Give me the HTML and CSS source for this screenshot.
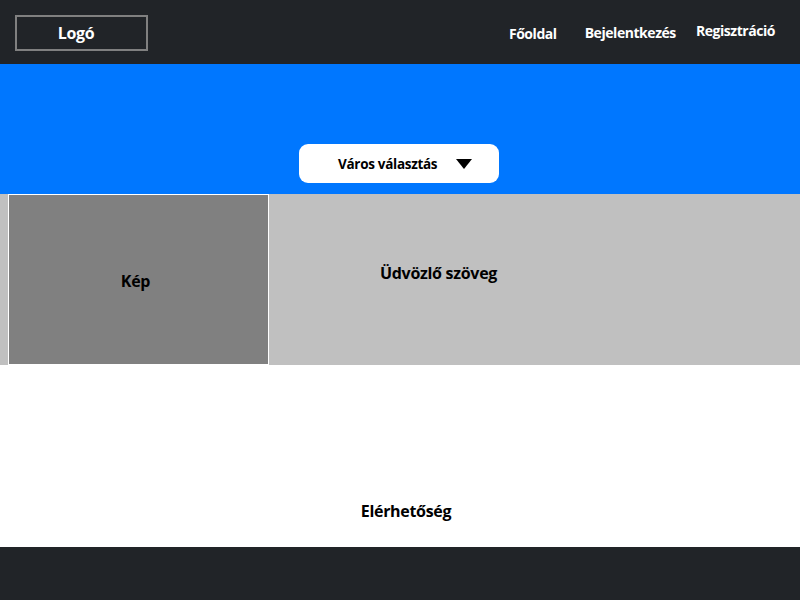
FILE: index.html
```html
<!DOCTYPE html>
<html lang="hu">
<head>
<meta charset="utf-8">
<title>Város</title>
<link rel="stylesheet" href="styles.css">
</head>
<body>
<header class="topbar">
  <div class="logo">Logó</div>
  <nav class="nav">
    <a class="nav-link nav-home" href="#">Főoldal</a>
    <a class="nav-link nav-login" href="#">Bejelentkezés</a>
    <a class="nav-link nav-reg" href="#">Regisztráció</a>
  </nav>
</header>
<section class="hero">
  <div class="city-select">
    <span class="city-label">Város választás</span>
    <svg class="caret" width="16" height="10" viewBox="0 0 16 10"><polygon points="0,0 16,0 8,10" fill="#000"/></svg>
  </div>
</section>
<section class="intro">
  <div class="picture">Kép</div>
  <div class="welcome">Üdvözlő szöveg</div>
</section>
<section class="contact">
  <div class="contact-title">Elérhetőség</div>
</section>
<footer class="footer"></footer>
</body>
</html>
```
FILE: styles.css
```css
* { box-sizing: border-box; }
html, body { margin: 0; padding: 0; }
body {
  font-family: "Open Sans", "Liberation Sans", sans-serif;
  font-weight: 700;
  color: #000;
  width: 800px;
  height: 600px;
  overflow: hidden;
}
.topbar {
  height: 64px;
  background: #212428;
  display: flex;
  align-items: flex-start;
  justify-content: space-between;
  padding: 15px 25px 0 15px;
}
.logo {
  width: 133px;
  height: 36px;
  border: 2px solid #808080;
  color: #fff;
  font-size: 16px;
  display: flex;
  align-items: center;
  justify-content: center;
  padding-right: 11px;
  letter-spacing: -0.3px;
}
.nav {
  display: flex;
  align-items: flex-start;
}
.nav-link {
  color: #fff;
  text-decoration: none;
  font-size: 14px;
  letter-spacing: -0.45px;
  line-height: 18px;
}
.nav-home { margin-top: 10px; margin-right: 28px; }
.nav-login { margin-top: 9px; margin-right: 20px; }
.nav-reg { margin-top: 7px; }
.hero {
  height: 130px;
  background: #0077ff;
  display: flex;
  align-items: flex-end;
  justify-content: center;
  padding-bottom: 11px;
}
.city-select {
  width: 200px;
  height: 39px;
  background: #fff;
  border-radius: 9px;
  display: flex;
  align-items: center;
  padding-left: 39px;
  margin-left: -2px;
}
.city-label {
  font-size: 13.5px;
  letter-spacing: -0.3px;
}
.caret { margin-left: 19px; margin-top: 1px; }
.intro {
  height: 171px;
  background: #c0c0c0;
  display: flex;
  padding-left: 8px;
}
.picture {
  width: 261px;
  height: 171px;
  background: #808080;
  border: 1px solid #fff;
  display: flex;
  align-items: center;
  justify-content: center;
  font-size: 16px;
  padding-top: 3px;
  padding-right: 6px;
  letter-spacing: -0.3px;
}
.welcome {
  font-size: 16px;
  margin-left: 111px;
  margin-top: 68px;
  letter-spacing: -0.3px;
}
.contact {
  height: 182px;
  background: #fff;
  display: flex;
  justify-content: center;
  align-items: flex-end;
  padding-bottom: 25px;
}
.contact-title {
  font-size: 16px;
  margin-left: 12px;
  letter-spacing: -0.3px;
}
.footer {
  height: 53px;
  background: #212428;
}
```
